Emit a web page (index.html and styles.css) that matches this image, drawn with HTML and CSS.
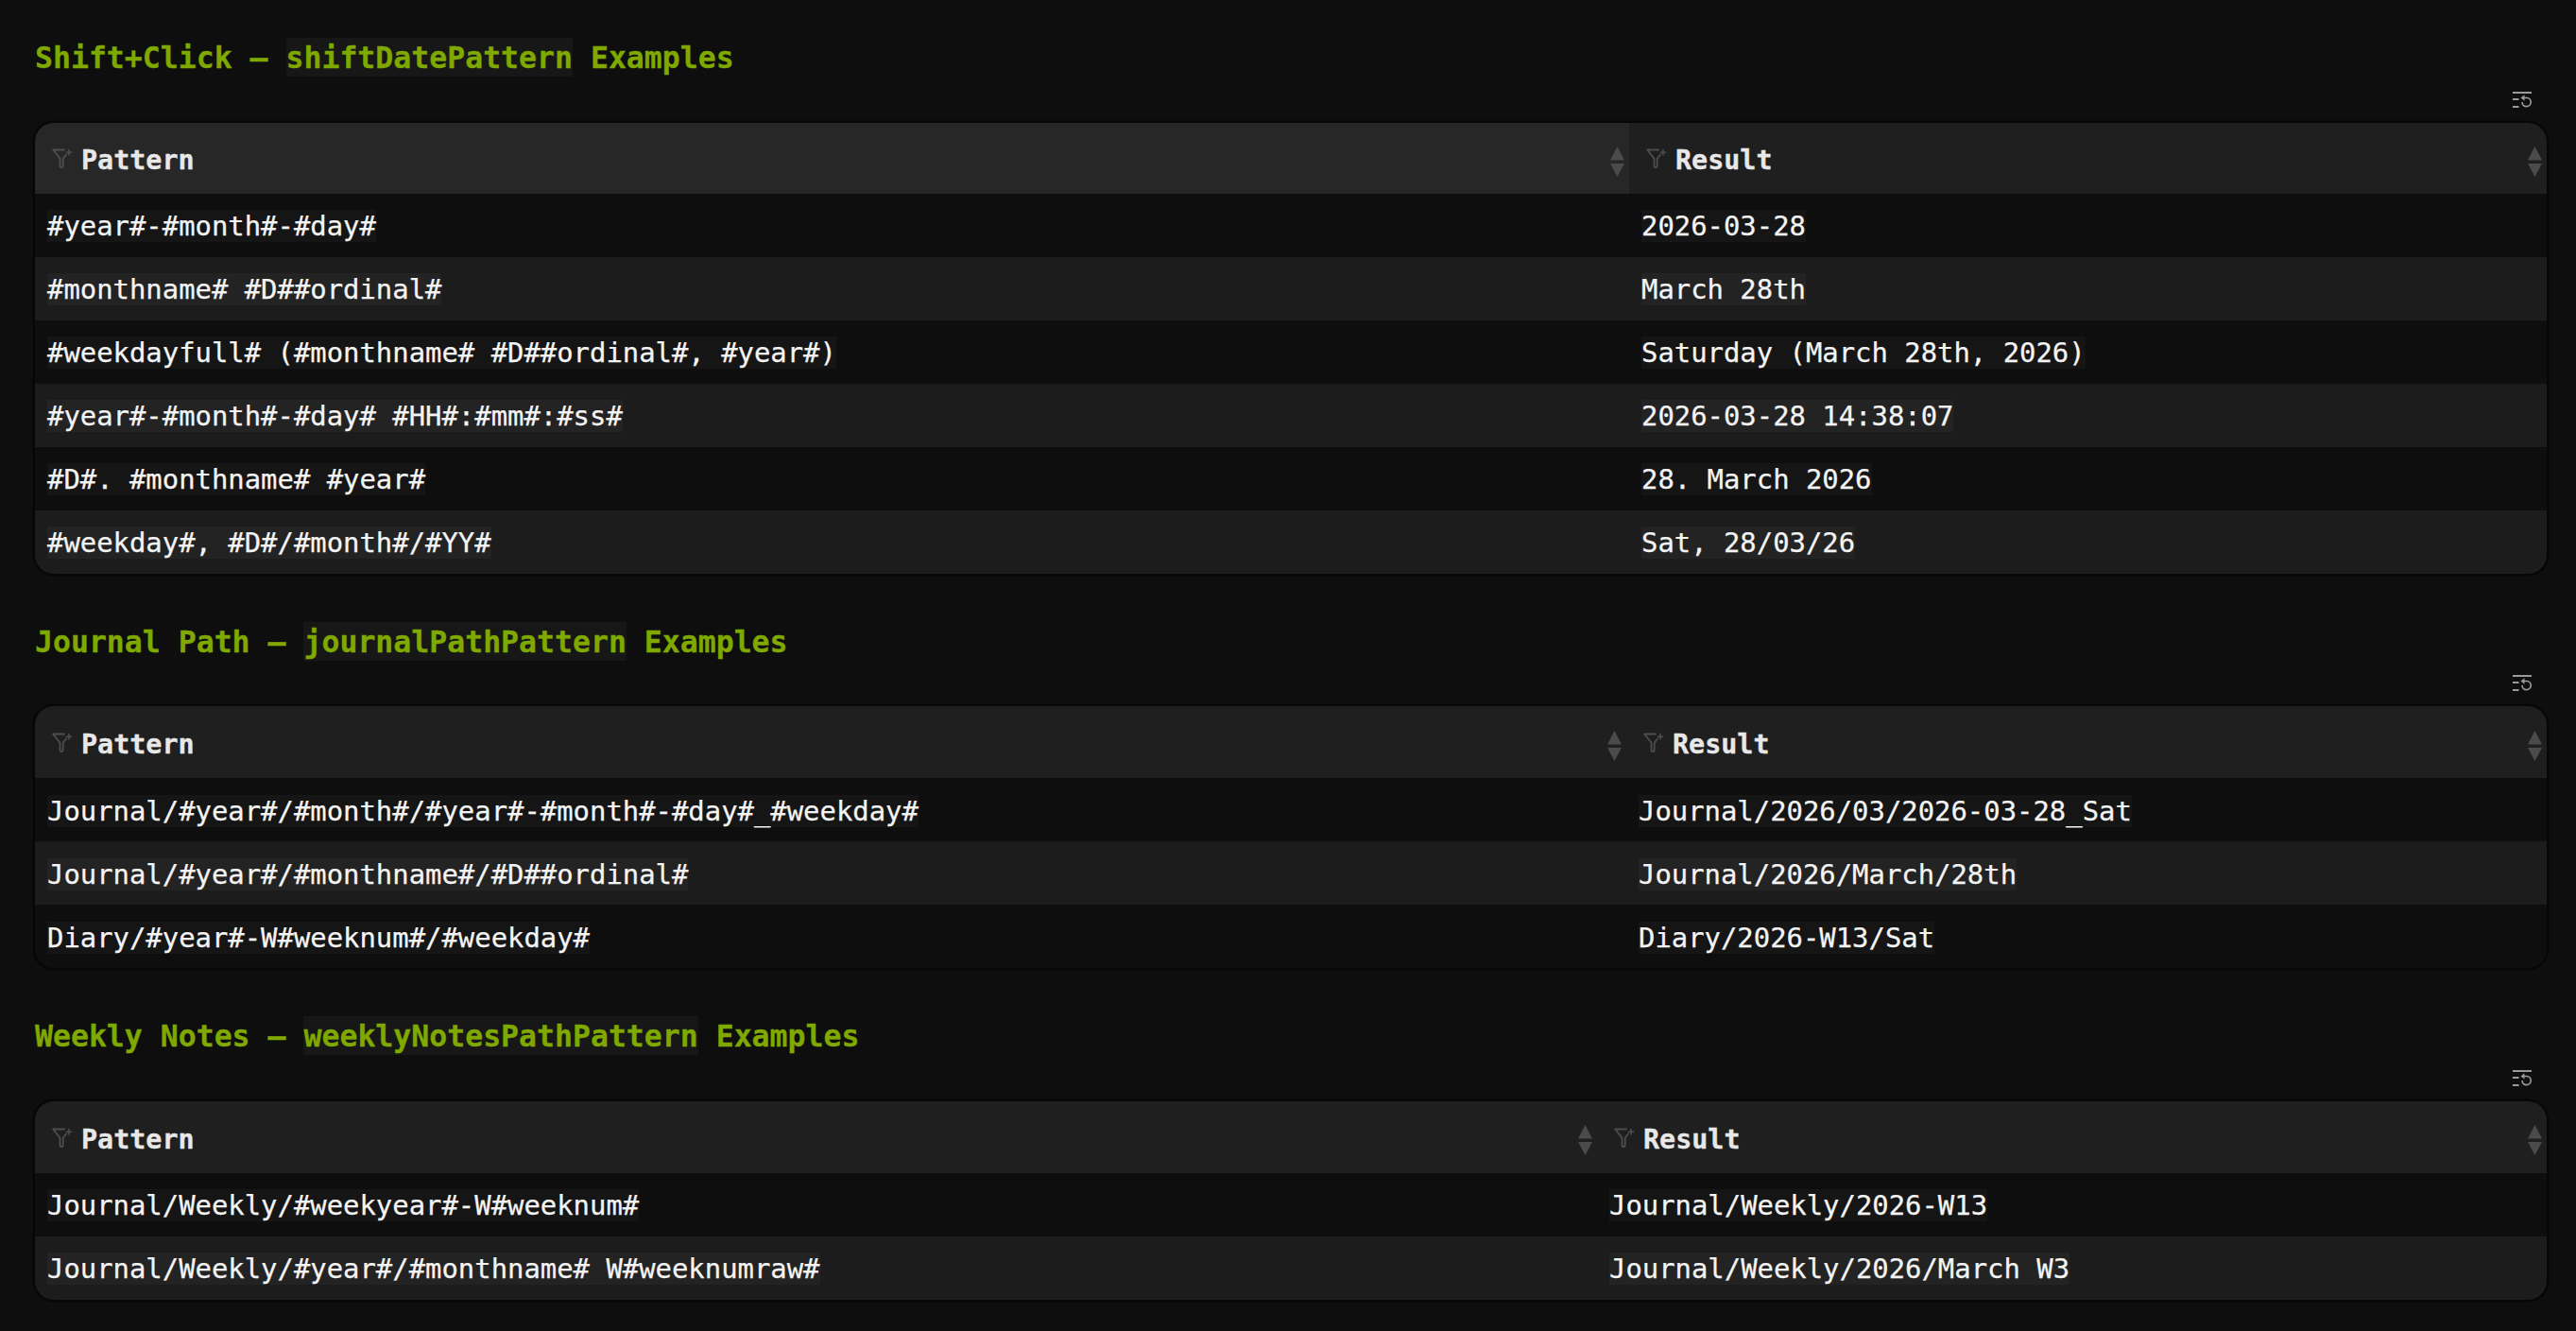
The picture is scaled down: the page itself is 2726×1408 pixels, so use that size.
FILE: index.html
```html
<!DOCTYPE html>
<html lang="en">
<head>
<meta charset="utf-8">
<title>Date Pattern Examples</title>
<link rel="stylesheet" href="styles.css">
</head>
<body>
<svg class="defs" width="0" height="0" aria-hidden="true">
  <symbol id="i-filter" viewBox="0 0 22 21">
    <path d="M13 1.5H1.2l7.3 9.2v7.6q0 1.7 1.6 1.7t1.6-1.7v-7.6l3.4-4.2" fill="none" stroke="currentColor" stroke-width="1.8" stroke-linejoin="round" stroke-linecap="round"/>
    <path d="M18 1v6.4M14.8 4.2h6.4" fill="none" stroke="currentColor" stroke-width="1.6"/>
  </symbol>
  <symbol id="i-sort" viewBox="0 0 15 32">
    <path d="M7.5 0L15 14.5H0z" fill="currentColor"/>
    <path d="M0 18H15L7.5 32z" fill="currentColor"/>
  </symbol>
  <symbol id="i-reset" viewBox="0 0 20 17">
    <path d="M0 1h20M0 8h6.5M0 16h6.5" fill="none" stroke="currentColor" stroke-width="2"/>
    <path d="M11 6.5h4a4.6 4.6 0 1 1-5 4.6" fill="none" stroke="currentColor" stroke-width="1.7"/>
    <path d="M8.5 6.5l4-3.2v6.4z" fill="currentColor"/>
  </symbol>
</svg>

<section class="block">
  <h3 class="title">Shift+Click — <code class="title-code">shiftDatePattern</code> Examples</h3>
  <div class="tools"><svg class="reset"><use href="#i-reset"/></svg></div>
  <div class="frame">
    <table class="grid cols-a">
      <thead>
        <tr>
          <th class="hover"><div class="head"><svg class="filter"><use href="#i-filter"/></svg><span class="label">Pattern</span><svg class="sort"><use href="#i-sort"/></svg></div></th>
          <th><div class="head"><svg class="filter"><use href="#i-filter"/></svg><span class="label">Result</span><svg class="sort"><use href="#i-sort"/></svg></div></th>
        </tr>
      </thead>
      <tbody>
        <tr><td><code>#year#-#month#-#day#</code></td><td><code>2026-03-28</code></td></tr>
        <tr><td><code>#monthname# #D##ordinal#</code></td><td><code>March 28th</code></td></tr>
        <tr><td><code>#weekdayfull# (#monthname# #D##ordinal#, #year#)</code></td><td><code>Saturday (March 28th, 2026)</code></td></tr>
        <tr><td><code>#year#-#month#-#day# #HH#:#mm#:#ss#</code></td><td><code>2026-03-28 14:38:07</code></td></tr>
        <tr><td><code>#D#. #monthname# #year#</code></td><td><code>28. March 2026</code></td></tr>
        <tr><td><code>#weekday#, #D#/#month#/#YY#</code></td><td><code>Sat, 28/03/26</code></td></tr>
      </tbody>
    </table>
  </div>
</section>

<section class="block">
  <h3 class="title">Journal Path — <code class="title-code">journalPathPattern</code> Examples</h3>
  <div class="tools"><svg class="reset"><use href="#i-reset"/></svg></div>
  <div class="frame">
    <table class="grid cols-b">
      <thead>
        <tr>
          <th><div class="head"><svg class="filter"><use href="#i-filter"/></svg><span class="label">Pattern</span><svg class="sort"><use href="#i-sort"/></svg></div></th>
          <th><div class="head"><svg class="filter"><use href="#i-filter"/></svg><span class="label">Result</span><svg class="sort"><use href="#i-sort"/></svg></div></th>
        </tr>
      </thead>
      <tbody>
        <tr><td><code>Journal/#year#/#month#/#year#-#month#-#day#_#weekday#</code></td><td><code>Journal/2026/03/2026-03-28_Sat</code></td></tr>
        <tr><td><code>Journal/#year#/#monthname#/#D##ordinal#</code></td><td><code>Journal/2026/March/28th</code></td></tr>
        <tr><td><code>Diary/#year#-W#weeknum#/#weekday#</code></td><td><code>Diary/2026-W13/Sat</code></td></tr>
      </tbody>
    </table>
  </div>
</section>

<section class="block">
  <h3 class="title">Weekly Notes — <code class="title-code">weeklyNotesPathPattern</code> Examples</h3>
  <div class="tools"><svg class="reset"><use href="#i-reset"/></svg></div>
  <div class="frame">
    <table class="grid cols-c">
      <thead>
        <tr>
          <th><div class="head"><svg class="filter"><use href="#i-filter"/></svg><span class="label">Pattern</span><svg class="sort"><use href="#i-sort"/></svg></div></th>
          <th><div class="head"><svg class="filter"><use href="#i-filter"/></svg><span class="label">Result</span><svg class="sort"><use href="#i-sort"/></svg></div></th>
        </tr>
      </thead>
      <tbody>
        <tr><td><code>Journal/Weekly/#weekyear#-W#weeknum#</code></td><td><code>Journal/Weekly/2026-W13</code></td></tr>
        <tr><td><code>Journal/Weekly/#year#/#monthname# W#weeknumraw#</code></td><td><code>Journal/Weekly/2026/March W3</code></td></tr>
      </tbody>
    </table>
  </div>
</section>
</body>
</html>
```
FILE: styles.css
```css
* { box-sizing: border-box; }
html, body { height: 100%; }
body {
  margin: 0;
  padding: 40px 31px 0 37px;
  background: #0e0e0e;
  color: #f4f4f4;
  font-family: "DejaVu Sans Mono", "Liberation Mono", monospace;
  overflow: hidden;
}
.defs { position: absolute; }
.block { margin-bottom: 51px; }
.block:last-child { margin-bottom: 0; }
.title {
  margin: 0;
  height: 41px;
  font-size: 31.5px;
  line-height: 43px;
  font-weight: 700;
  color: #7fa800;
  white-space: pre;
  -webkit-text-stroke: 0.3px currentColor;
}
.title-code {
  font: inherit;
  display: inline-block;
  height: 41px;
  background: #171717;
}
.tools {
  height: 48.5px;
  padding: 15.5px 16px 0 0;
  display: flex;
  justify-content: flex-end;
  align-items: flex-start;
}
.reset { width: 20px; height: 17px; color: #9a9a9a; }
.frame {
  border-radius: 20px;
  overflow: hidden;
  box-shadow: 0 0 0 2.5px #070707;
}
.grid {
  width: 100%;
  table-layout: fixed;
  border-collapse: collapse;
}
.cols-a th:first-child { width: 1687px; }
.cols-b th:first-child { width: 1684px; }
.cols-c th:first-child { width: 1653px; }
th {
  height: 76px;
  padding: 0;
  background: #1f1f1f;
  font-weight: 700;
  text-align: left;
}
.cols-a th { height: 75px; }
th.hover { background: #272727; }
.head {
  display: flex;
  align-items: center;
  padding: 5px 5.5px 0 18px;
  color: #e8e8e8;
  font-size: 28.4px;
  -webkit-text-stroke: 0.3px currentColor;
}
.filter { width: 22px; height: 21px; color: #4e4e4e; margin: -4px 9px 0 0; flex: none; }
.label { flex: 1; }
.sort { width: 15px; height: 32px; color: #4b4b4b; margin-top: 2px; flex: none; }
td {
  height: 67px;
  padding: 2px 13px 0;
  vertical-align: middle;
}
tbody tr:nth-child(odd) td { background: #0e0e0e; }
tbody tr:nth-child(even) td { background: #1c1c1c; }
td code {
  font-family: inherit;
  font-size: 28.9px;
  white-space: pre;
  background: rgba(255, 255, 255, 0.03);
  -webkit-text-stroke: 0.25px currentColor;
}
```
